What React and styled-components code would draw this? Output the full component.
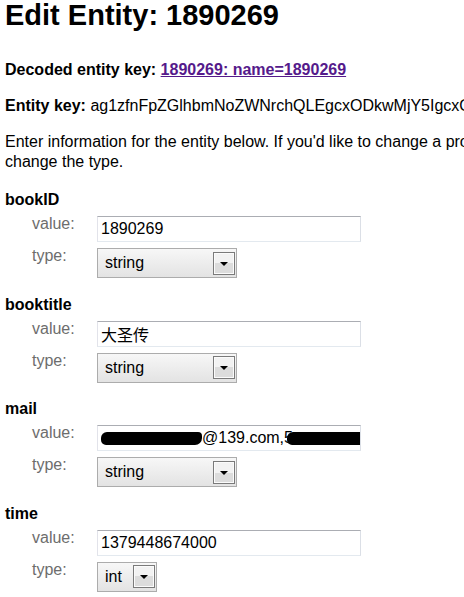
import React from 'react';
import styled, { createGlobalStyle } from 'styled-components';

const GlobalStyle = createGlobalStyle`
  html, body {
    margin: 0;
    padding: 0;
    background: #fff;
    overflow: hidden;
  }

  body {
    font-family: "Liberation Sans", Arial, sans-serif;
    font-size: 16px;
    color: #000;
  }
`;

const ENTITY_KEY = 'ag1zfnFpZGlhbmNoZWNrchQLEgcxODkwMjY5IgcxODkwMjY5DA';

const Page = styled.div`
  width: 1000px;
  padding: 0 5px;
`;

const Title = styled.h1`
  margin: 0 0 30px;
  font-size: 29px;
  line-height: 30px;
  font-weight: bold;
`;

const Para = styled.p`
  margin: 16px 0;
  line-height: 20px;
`;

const Intro = styled(Para)`
  margin-bottom: 18px;
`;

const Key = styled.b`
  font-weight: bold;
`;

const KeyLink = styled.a`
  color: #551a8b;
  font-weight: bold;
  text-decoration: underline;
`;

const Property = styled.div`
  margin-top: 16.6px;
`;

const PropName = styled.div`
  font-weight: bold;
  line-height: 20px;
  margin-bottom: 4px;
`;

const Rows = styled.div`
  display: grid;
  grid-template-columns: 65px auto;
  row-gap: 4px;
  padding-left: 27px;
  justify-items: start;
  align-items: start;
`;

const Label = styled.div`
  color: #6d6d6d;
  line-height: 20px;
`;

const Control = styled.div`
  margin-top: 2px;
`;

const Field = styled.div`
  box-sizing: border-box;
  width: 264px;
  height: 26px;
  padding: 0 3px;
  display: flex;
  align-items: center;
  overflow: hidden;
  white-space: nowrap;
  line-height: 20px;
  background: #fff;
  border: 1px solid;
  border-color: #abadb3 #dbdfe6 #e3e9ef #e2e3ea;
  font-family: ${(p) =>
    p.$cjk ? '"Noto Sans CJK SC", "Liberation Sans", sans-serif' : 'inherit'};
`;

const Redact = styled.span`
  display: inline-block;
  flex: none;
  width: ${(p) => p.$w}px;
  height: 13px;
  margin-left: ${(p) => p.$ml || 0}px;
  background: #000;
  border-radius: 6px 4px 7px 5px;
`;

const Select = styled.div`
  box-sizing: border-box;
  width: ${(p) => p.$w}px;
  height: 30px;
  padding: 0 1px 0 7px;
  display: flex;
  align-items: center;
  justify-content: space-between;
  border: 1px solid #acacac;
  background: linear-gradient(#f7f7f7, #e3e3e3);
  line-height: 20px;
`;

const DropButton = styled.span`
  box-sizing: border-box;
  width: 22px;
  height: 23px;
  display: flex;
  align-items: center;
  justify-content: center;
  border: 1px solid #7a7a7a;
  box-shadow: inset 0 0 0 1px #fbfbfb;
  background: linear-gradient(#f2f2f2 0 50%, #dcdcdc 50% 100%);

  &::after {
    content: '';
    border-left: 4px solid transparent;
    border-right: 4px solid transparent;
    border-top: 4px solid #000;
    margin-top: 1px;
  }
`;

const PROPERTIES = [
  { name: 'bookID', value: '1890269', type: 'string' },
  { name: 'booktitle', value: '大圣传', type: 'string', cjk: true },
  {
    name: 'mail',
    value: (
      <>
        <Redact $w={101} />
        @139.com,5
        <Redact $w={80} $ml={-6} />
      </>
    ),
    type: 'string'
  },
  { name: 'time', value: '1379448674000', type: 'int' }
];

const SELECT_WIDTH = { string: 140, int: 60 };

const App = () => (
  <React.Fragment>
    <GlobalStyle />
    <Page>
      <Title>Edit Entity: 1890269</Title>
      <Para>
        <Key>Decoded entity key:</Key>{' '}
        <KeyLink href="#key">1890269: name=1890269</KeyLink>
      </Para>
      <Para>
        <Key>Entity key:</Key> {ENTITY_KEY}
      </Para>
      <Intro>
        Enter information for the entity below. If you'd like to change a
        property's type, set it to Null, save the entity, edit again, and
        <br />
        change the type.
      </Intro>
      {PROPERTIES.map(({ name, value, type, cjk }) => (
        <Property key={name}>
          <PropName>{name}</PropName>
          <Rows>
            <Label>value:</Label>
            <Control>
              <Field $cjk={cjk}>{value}</Field>
            </Control>
            <Label>type:</Label>
            <Control>
              <Select $w={SELECT_WIDTH[type]}>
                {type}
                <DropButton />
              </Select>
            </Control>
          </Rows>
        </Property>
      ))}
    </Page>
  </React.Fragment>
);

export default App;
